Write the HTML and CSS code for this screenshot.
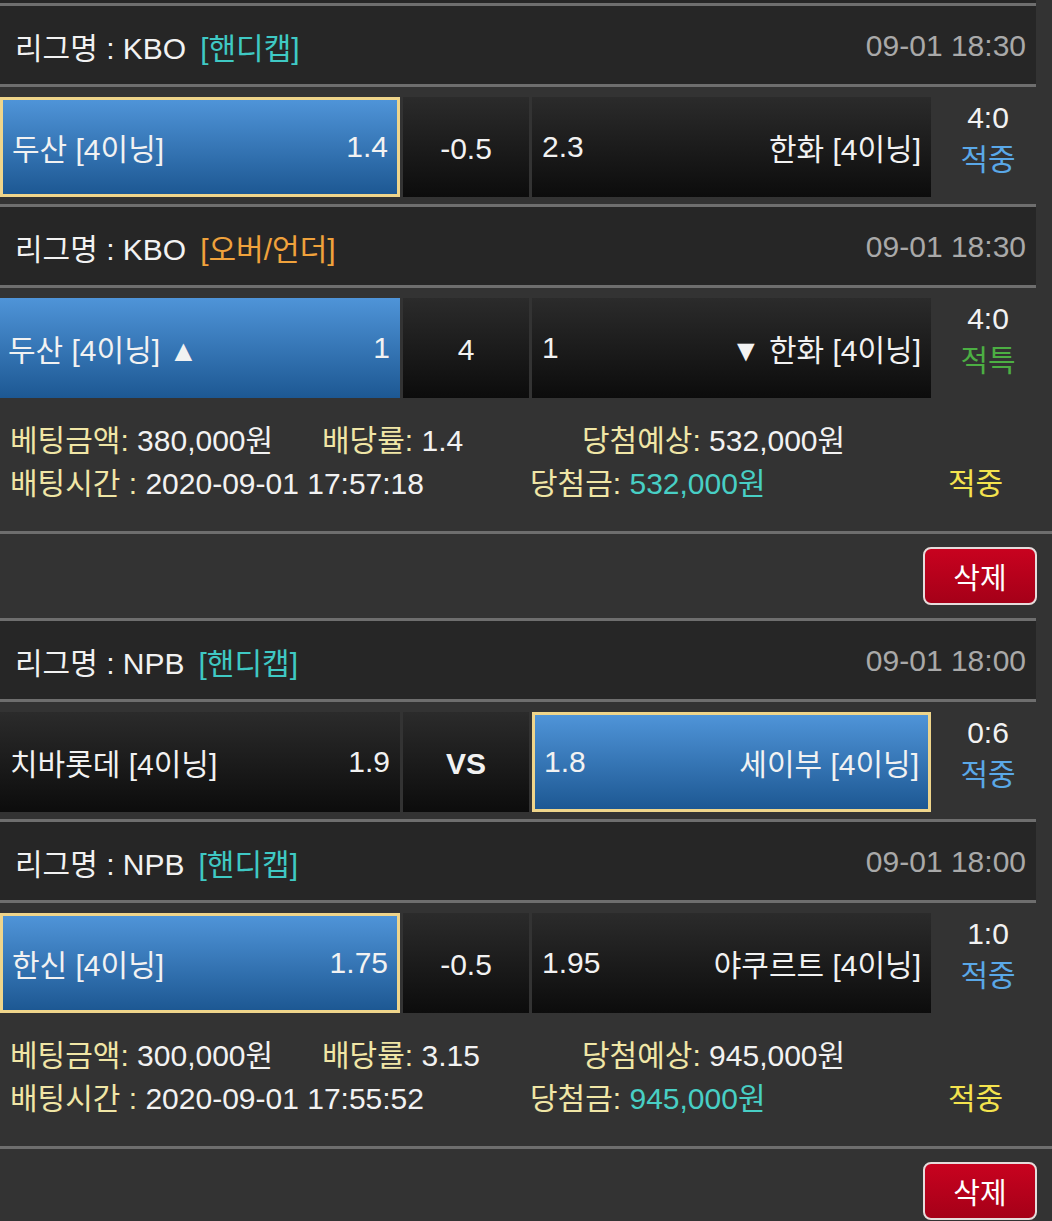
FILE: index.html
```html
<!DOCTYPE html>
<html lang="ko">
<head>
  <meta charset="UTF-8" />
  <title>배팅내역</title>
  <link rel="stylesheet" href="styles.css">
</head>
<body>
  <div class="prev"></div>

  <div class="bet">
    <div class="game">
      <div class="league">
        <span>리그명 : KBO</span>
        <span class="type handi">[핸디캡]</span>
        <span class="date">09-01 18:30</span>
      </div>
      <div class="match">
        <div class="cell side home picked"><span>두산 [4이닝]</span><span>1.4</span></div>
        <div class="cell mid">-0.5</div>
        <div class="cell side away"><span>2.3</span><span>한화 [4이닝]</span></div>
        <div class="result"><div>4:0</div><div class="hit">적중</div></div>
      </div>
    </div>

    <div class="game">
      <div class="league">
        <span>리그명 : KBO</span>
        <span class="type ou">[오버/언더]</span>
        <span class="date">09-01 18:30</span>
      </div>
      <div class="match">
        <div class="cell side home chosen"><span>두산 [4이닝] ▲</span><span>1</span></div>
        <div class="cell mid">4</div>
        <div class="cell side away"><span>1</span><span>▼ 한화 [4이닝]</span></div>
        <div class="result"><div>4:0</div><div class="special">적특</div></div>
      </div>
    </div>

    <div class="info">
      <div class="line">
        <span class="c1"><b>베팅금액:</b> 380,000원</span>
        <span class="c2"><b>배당률:</b> 1.4</span>
        <span><b>당첨예상:</b> 532,000원</span>
      </div>
      <div class="line">
        <span class="c1 wide"><b>배팅시간 :</b> 2020-09-01 17:57:18</span>
        <span class="c2 wide"><b>당첨금:</b> <em>532,000원</em></span>
        <span class="state">적중</span>
      </div>
    </div>
  </div>

  <div class="actions"><button class="btn-del">삭제</button></div>

  <div class="bet">
    <div class="game">
      <div class="league">
        <span>리그명 : NPB</span>
        <span class="type handi">[핸디캡]</span>
        <span class="date">09-01 18:00</span>
      </div>
      <div class="match">
        <div class="cell side home"><span>치바롯데 [4이닝]</span><span>1.9</span></div>
        <div class="cell mid vs">VS</div>
        <div class="cell side away picked"><span>1.8</span><span>세이부 [4이닝]</span></div>
        <div class="result"><div>0:6</div><div class="hit">적중</div></div>
      </div>
    </div>

    <div class="game">
      <div class="league">
        <span>리그명 : NPB</span>
        <span class="type handi">[핸디캡]</span>
        <span class="date">09-01 18:00</span>
      </div>
      <div class="match">
        <div class="cell side home picked"><span>한신 [4이닝]</span><span>1.75</span></div>
        <div class="cell mid">-0.5</div>
        <div class="cell side away"><span>1.95</span><span>야쿠르트 [4이닝]</span></div>
        <div class="result"><div>1:0</div><div class="hit">적중</div></div>
      </div>
    </div>

    <div class="info">
      <div class="line">
        <span class="c1"><b>베팅금액:</b> 300,000원</span>
        <span class="c2"><b>배당률:</b> 3.15</span>
        <span><b>당첨예상:</b> 945,000원</span>
      </div>
      <div class="line">
        <span class="c1 wide"><b>배팅시간 :</b> 2020-09-01 17:55:52</span>
        <span class="c2 wide"><b>당첨금:</b> <em>945,000원</em></span>
        <span class="state">적중</span>
      </div>
    </div>
  </div>

  <div class="actions"><button class="btn-del">삭제</button></div>
</body>
</html>
```

FILE: styles.css
```css
:root {
  --fundo: #333333;
  --cabecalho: #262626;
  --linha: #6e6e6e;
  --texto: #f2f2f2;
  --rotulo: #f0e6a6;
}

* {
  box-sizing: border-box;
}

body {
  margin: 0;
  background-color: var(--fundo);
  color: var(--texto);
  font-family: "Liberation Sans", "Noto Sans CJK KR", sans-serif;
  font-size: 30px;
  overflow: hidden;
}

.prev {
  width: 1036px;
  height: 3px;
  background-color: var(--cabecalho);
}

.game {
  width: 1036px;
}

.league {
  display: flex;
  align-items: center;
  height: 84px;
  padding: 2px 10px 0 15px;
  background-color: var(--cabecalho);
  border-top: 3px solid var(--linha);
  border-bottom: 3px solid var(--linha);
  white-space: nowrap;
}

.type {
  margin-left: 14px;
}

.handi {
  color: #3fc9c4;
}

.ou {
  color: #f0a23c;
}

.date {
  margin-left: auto;
  color: #a9a9a9;
}

.match {
  display: flex;
  gap: 3px;
  padding: 10px 0 7px;
}

.cell {
  height: 100px;
  display: flex;
  align-items: center;
  background: linear-gradient(#2b2b2b, #0c0c0c);
  white-space: nowrap;
}

.side {
  justify-content: space-between;
  padding: 0 10px;
}

.home {
  width: 400px;
}

.mid {
  width: 126px;
  justify-content: center;
  padding-top: 4px;
}

.vs {
  font-weight: bold;
}

.away {
  width: 399px;
}

.chosen,
.picked {
  background: linear-gradient(#4f94d8, #1d5893);
}

.chosen {
  padding-left: 8px;
}

.picked {
  border: 3px solid #efd58b;
  padding: 0 9px;
}

.result {
  flex: 1;
  text-align: center;
  line-height: 42px;
  margin-left: -3px;
  padding-left: 9px;
}

.hit {
  color: #5aa8e8;
}

.special {
  color: #4caf43;
}

.info {
  padding: 14px 10px 26px;
  line-height: 43px;
  white-space: nowrap;
}

.line {
  display: flex;
}

.line b {
  font-weight: normal;
  color: var(--rotulo);
}

.line em {
  font-style: normal;
  color: #48cfc5;
}

.c1 {
  width: 312px;
}

.c2 {
  width: 260px;
}

.c1.wide {
  width: 520px;
}

.c2.wide {
  width: 418px;
}

.state {
  color: #f4e34e;
}

.actions {
  display: flex;
  justify-content: flex-end;
  height: 87px;
  padding: 13px 15px 0 0;
  border-top: 3px solid var(--linha);
}

.btn-del {
  width: 114px;
  height: 58px;
  background: linear-gradient(#c8021f, #a50018);
  color: #fff;
  border: 2px solid #e6dcdc;
  border-radius: 8px;
  font-family: inherit;
  font-size: 29px;
  cursor: pointer;
}
```
